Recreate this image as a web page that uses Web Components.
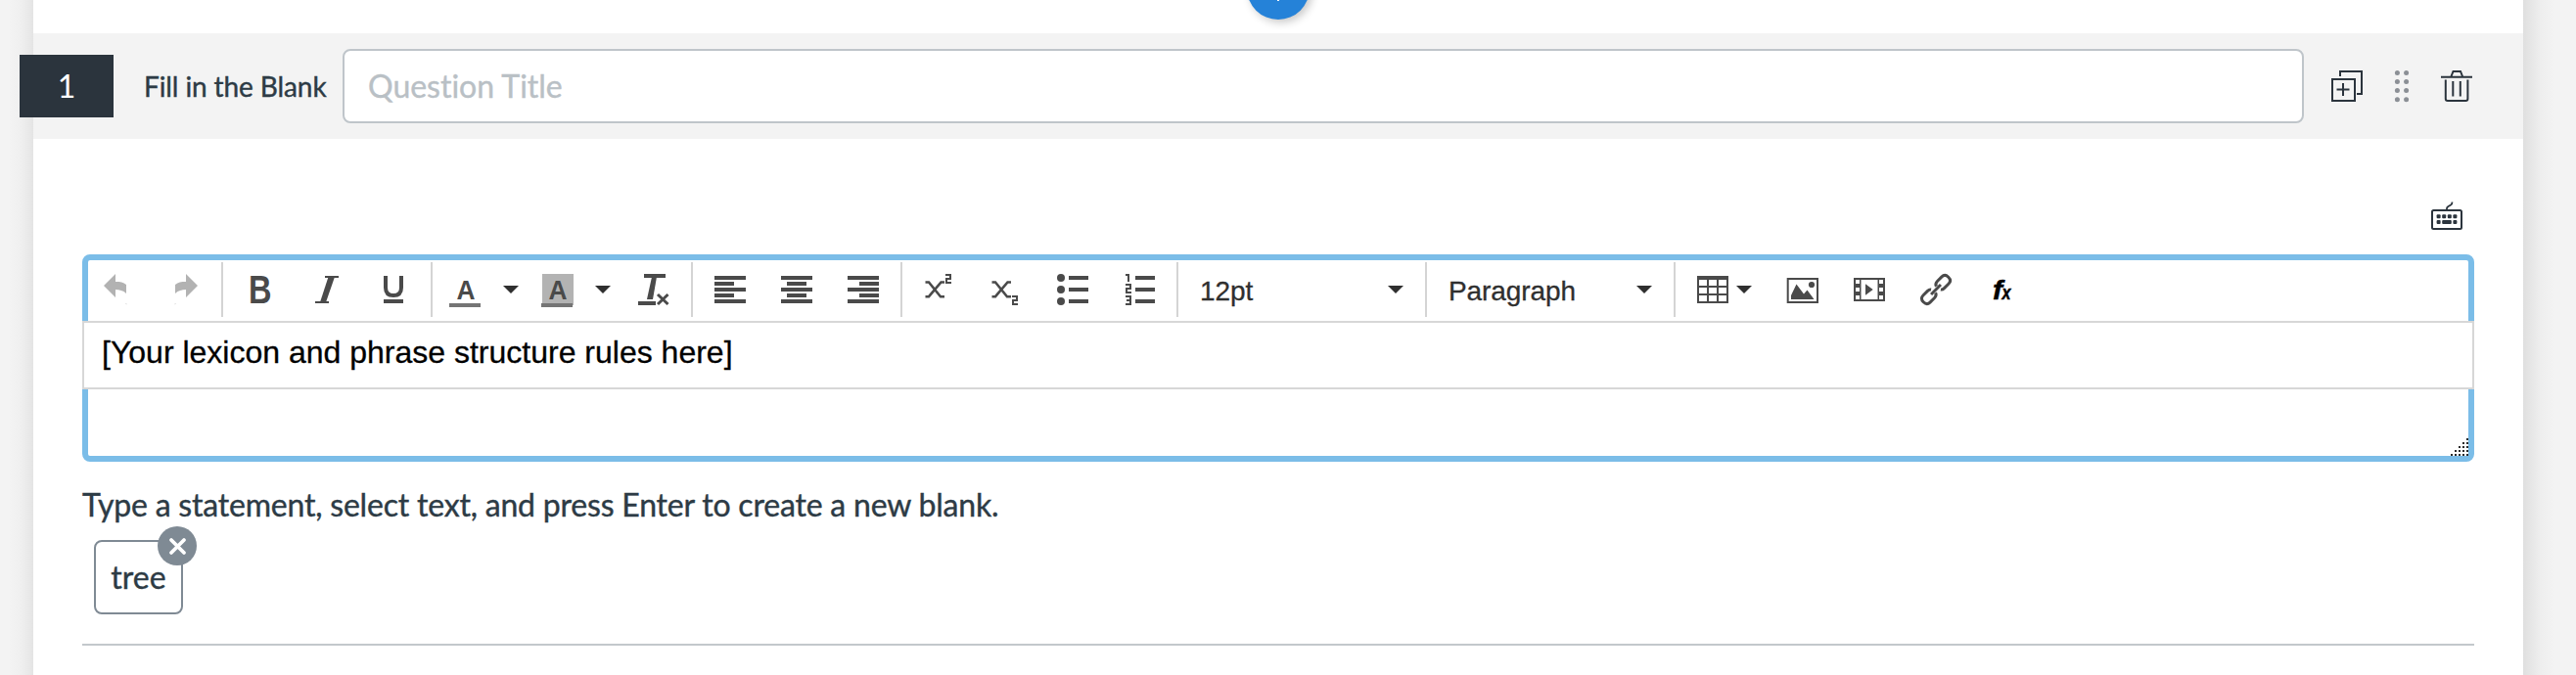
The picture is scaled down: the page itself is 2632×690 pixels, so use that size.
<!DOCTYPE html>
<html lang="en">
<head>
<meta charset="utf-8">
<title>Quiz editor</title>
<style>
html,body{margin:0;height:690px;overflow:hidden;background:#f3f3f3}
body{font-family:Lato,"Liberation Sans",sans-serif;color:#2d3b45;font-size:32px;font-variant-ligatures:none}
</style>
</head>
<body>
<quiz-sheet>
  <add-button slot="float"></add-button>
  <question-header number="1" label="Fill in the Blank">Question Title</question-header>
  <question-body>
    <ui-icon name="keyboard" slot="tools"></ui-icon>
    <rich-editor>
      <tool-bar slot="toolbar">
        <tool-group><tool-button icon="undo" disabled></tool-button><tool-button icon="redo" disabled></tool-button></tool-group>
        <tool-group><tool-button icon="bold"></tool-button><tool-button icon="italic"></tool-button><tool-button icon="underline"></tool-button></tool-group>
        <tool-group><tool-button icon="color" menu></tool-button><tool-button icon="highlight" menu></tool-button><tool-button icon="clear"></tool-button></tool-group>
        <tool-group><tool-button icon="left"></tool-button><tool-button icon="center"></tool-button><tool-button icon="right"></tool-button></tool-group>
        <tool-group><tool-button icon="sup"></tool-button><tool-button icon="sub"></tool-button><tool-button icon="bullets"></tool-button><tool-button icon="numbers"></tool-button></tool-group>
        <tool-group><tool-select>12pt</tool-select></tool-group>
        <tool-group><tool-select>Paragraph</tool-select></tool-group>
        <tool-group><tool-button icon="table" menu tight></tool-button><tool-button icon="image"></tool-button><tool-button icon="media"></tool-button><tool-button icon="link"></tool-button><tool-button icon="fx"></tool-button></tool-group>
      </tool-bar>
      [Your lexicon and phrase structure rules here]
    </rich-editor>
    <span slot="hint">Type a statement, select text, and press Enter to create a new blank.</span>
    <blank-chip slot="blanks">tree</blank-chip>
  </question-body>
</quiz-sheet>

<script>
const define = (name, render) => customElements.define(name, class extends HTMLElement {
  constructor() { super(); this.attachShadow({ mode: 'open' }); }
  connectedCallback() {
    const t = document.createElement('template');
    t.innerHTML = render(this);
    this.shadowRoot.replaceChildren(t.content.cloneNode(true));
  }
});

const bar = (x, y, w, h = 4) => `<rect x="${x}" y="${y}" width="${w}" height="${h}"/>`;
const stroke = (d, w) => `<path d="${d}" fill="none" stroke="currentColor" stroke-width="${w}"/>`;
const two = (x, y) => stroke(`M${x} ${y + 1}h5v4h-4v4h5`, 2);
const lines = (x, w) => [2, 14, 26].map(y => bar(0, y, 32)).join('') + [8, 20].map(y => bar(x, y, w)).join('');
const letterA = '<text x="16" y="26" text-anchor="middle" font-family="Liberation Sans,sans-serif" font-weight="700" font-size="28" textLength="19" lengthAdjust="spacingAndGlyphs">A</text>';
const back = 'M2 12L14 0V8C19 8 22 8.500 25 11V20C22 17 18 16 14 16V24ZM24.400 30h.8v1.500z';

const ICONS = {
  undo: `<path d="${back}"/>`,
  redo: `<path transform="matrix(-1 0 0 1 32 0)" d="${back}"/>`,
  bold: '<text x="4" y="30" font-family="Liberation Sans,sans-serif" font-weight="700" font-size="40" textLength="23.500" lengthAdjust="spacingAndGlyphs">B</text>',
  italic: bar(14, 2, 14, 2) + bar(4, 28, 14, 2) + '<path d="M17.500 3h6.500L15 29H9z"/>',
  underline: stroke('M8 2v12q0 8 8 8t8-8V2', 4) + bar(6, 26, 20),
  color: letterA + '<rect x="-1" y="30" width="32" height="4" fill="#757575"/>',
  highlight: '<rect width="32" height="32" fill="#b3b3b3"/>' + letterA + '<rect x="-1" y="30" width="32" height="4" fill="#757575"/>',
  clear: bar(6, 0, 22) + bar(0, 28, 18) + '<path d="M14 3h5L15 26H9z"/>' + stroke('M20 21l10.500 10M30.500 21L20 31', 3),
  left: lines(0, 20), center: lines(6, 20), right: lines(12, 20),
  sup: stroke('M1.500 8.500H5L17 23.200h4M21 8.500h-3.500L5 23.200H1.500', 2.6) + two(22, 0),
  sub: stroke('M1.500 8.500H5L17 23.200h4M21 8.500h-3.500L5 23.200H1.500', 2.6) + two(22, 22),
  bullets: [4, 16, 28].map(y => `<circle cx="4" cy="${y}" r="4"/>` + bar(12, y - 2, 20)).join(''),
  numbers: [2, 14, 26].map(y => bar(12, y, 20)).join('') + stroke('M2 1h3v7', 2) + two(2, 10) + stroke('M2 23h5v8H2M3 27h4', 2),
  table: '<path fill-rule="evenodd" d="M0 2h32v28H0zM2 6v6h8V6zM12 6v6h8V6zM22 6v6h8V6zM2 14v6h8v-6zM12 14v6h8v-6zM22 14v6h8v-6zM2 22v6h8v-6zM12 22v6h8v-6zM22 22v6h8v-6z"/>',
  image: '<path fill-rule="evenodd" d="M-.3 4H32v26H-.3zM1.700 6v22H30V6z"/><path d="M4 26V22L9.500 10.500L17 20.500L20.500 16.500L27.500 26z"/><circle cx="25" cy="11" r="3.100"/>',
  media: '<path fill-rule="evenodd" d="M0 4h32v24H0zM2 6v4h4V6zM2 14v4h4v-4zM2 22v4h4v-4zM26 6v4h4V6zM26 14v4h4v-4zM26 22v4h4v-4zM7.500 6v20h17V6z"/><path d="M12 10.300L19.700 16L12 21.700z"/>',
  link: '<g transform="translate(16 16) rotate(-45)">' + stroke('M3.500 3.500Q4.500 5 7 5H13.500Q18 5 18 0T13.500 -5H7Q3.500 -5 2.600 -2M-3.500 -3.500Q-4.500 -5 -7 -5H-13.500Q-18 -5 -18 0T-13.500 5H-7Q-3.500 5 -2.600 2', 3) + stroke('M-7 0H7', 3) + '</g>',
  fx: '<g fill="#000" stroke="#000" stroke-width=".5" font-family="Liberation Sans,sans-serif" font-style="italic" font-weight="700"><text x="6" y="26" font-size="28" textLength="10" lengthAdjust="spacingAndGlyphs">f</text><text x="15.500" y="26" font-size="20" textLength="9" lengthAdjust="spacingAndGlyphs">x</text></g>',
  duplicate: stroke('M9 6V1h22v23h-5', 2) + stroke('M1 9h23v22H1z', 2) + stroke('M5.500 19.500h13M12 13v13', 2),
  drag: '<g fill="#8b8f95">' + [2.400, 11.500, 20.500, 29.700].map(y => `<circle cx="11.400" cy="${y}" r="2.500"/><circle cx="20.600" cy="${y}" r="2.500"/>`).join('') + '</g>',
  trash: stroke('M0 6.700h32M10.500 6L12.500 1h7.500l2 5M4.800 9.500V29q0 2 2 2h18.600q2 0 2-2V9.500M12.300 11v15.500M19.800 11v15.500', 2),
  keyboard: '<rect x="1" y="10" width="30" height="19" rx="1.500" fill="none" stroke="currentColor" stroke-width="2"/>' + stroke('M16 10V8q0-1 1.500-2l2.500-1.400q1.500-1 1.500-3.100', 1.8)
    + [5.600, 11.200, 16.800, 22.400].map(x => `<rect x="${x}" y="14.300" width="4" height="4" rx="1"/>`).join('')
    + '<rect x="5.600" y="19.900" width="4" height="4" rx="1"/><rect x="11.200" y="19.900" width="9.600" height="4" rx="1"/><rect x="22.400" y="19.900" width="4" height="4" rx="1"/>'
};

define('ui-icon', el => `<style>:host{display:block;width:32px;height:32px;flex:none}svg{display:block;overflow:visible}</style>
  <svg width="32" height="32" viewBox="0 0 32 32" fill="currentColor">${ICONS[el.getAttribute('name')]}</svg>`);

define('quiz-sheet', () => `<style>
  :host{display:block;position:relative;box-sizing:border-box;width:2544px;height:690px;margin-left:34px;padding-top:34px;background:#fff}
  :host::before,:host::after{content:"";position:absolute;top:0;bottom:0}
  :host::before{left:-24px;width:24px;background:linear-gradient(to left,#e4e4e4,#ebebeb 30%,#f0f0f0 60%,#f3f3f3)}
  :host::after{right:-32px;width:32px;background:linear-gradient(to right,#dfdfdf,#e7e7e7 28%,#eee 55%,#f3f3f3)}
  </style><slot name="float"></slot><slot></slot>`);

define('add-button', () => `<style>
  :host{position:absolute;left:1240px;top:-44px;width:64px;height:64px;border-radius:50%;background:#2582d8;box-shadow:3px 3px 9px rgba(0,0,0,.22);display:grid;place-items:center}
  svg{display:block}</style><svg width="26" height="26" viewBox="0 0 26 26" fill="none" stroke="#fff" stroke-width="2"><path d="M13 0v26M0 13h26"/></svg>`);

define('question-header', el => `<style>
  :host{display:flex;align-items:center;box-sizing:border-box;height:108px;background:#f3f3f3;padding-right:52px}
  .num{position:relative;z-index:1;width:96px;height:64px;line-height:64px;margin-left:-14px;background:#2b343d;color:#fff;text-align:center;flex:none}
  .label{width:203px;margin-left:31px;font-size:28px;letter-spacing:-.1px;flex:none;white-space:nowrap;-webkit-text-stroke:.4px currentColor}
  .title{flex:1;height:72px;line-height:72px;border:2px solid #bfc5ca;border-radius:8px;background:#fff;color:#b9c0c5;padding-left:24px;margin-right:28px;-webkit-text-stroke:.4px currentColor}
  .icons{display:flex;gap:24px;color:#2b343d}
  </style><div class="num">${el.getAttribute('number')}</div><div class="label">${el.getAttribute('label')}</div>
  <div class="title"><slot></slot></div>
  <div class="icons"><ui-icon name="duplicate"></ui-icon><ui-icon name="drag"></ui-icon><ui-icon name="trash"></ui-icon></div>`);

define('question-body', () => `<style>
  :host{display:block;margin:0 50px}
  .tools{display:flex;justify-content:flex-end;height:55px;padding:63px 12px 0 0;color:#2b343d}
  .hint{height:40px;line-height:40px;margin-top:24px;white-space:nowrap;letter-spacing:-.2px;-webkit-text-stroke:.4px currentColor}
  .blanks{display:flex;padding:16px 12px 30px;border-bottom:2px solid #c3c8cc}
  </style><div class="tools"><slot name="tools"></slot></div><slot></slot>
  <div class="hint"><slot name="hint"></slot></div><div class="blanks"><slot name="blanks"></slot></div>`);

define('rich-editor', () => `<style>
  :host{display:block;position:relative;box-sizing:border-box;height:212px;border:6px solid #7bbde8;border-radius:8px;background:#fff}
  .text{margin:0 -6px;box-sizing:border-box;height:70px;border:2px solid #d7d7d7;background:#fff;color:#000;padding-left:18px;line-height:60px;font-family:"Liberation Sans",Arial,sans-serif;font-size:32px;-webkit-text-stroke:.3px currentColor}
  svg{position:absolute;right:0;bottom:0;display:block}
  </style><slot name="toolbar"></slot><div class="text"><slot></slot></div>
  <svg width="18" height="18" fill="#2b2b2b">${[0, 1, 2, 3, 4].map(r => Array.from({ length: r + 1 }, (_, c) => bar(16 - 4 * c, 4 * r, 2, 2)).join('')).join('')}</svg>`);

define('tool-bar', () => `<style>:host{display:flex;box-sizing:border-box;height:62px;padding-top:2px;margin-left:-4px}</style><slot></slot>`);
define('tool-group', () => `<style>
  :host{display:flex;height:56px;padding:0 4px;border-left:2px solid #d4d4d4}
  :host(:first-child){border-left:0;padding-left:0}</style><slot></slot>`);

define('tool-button', el => `<style>
  :host{display:flex;align-items:center;box-sizing:border-box;width:68px;padding-left:18px;color:#4a4a4a}
  :host([menu]){width:94px;padding-left:14px;gap:22px}
  :host([tight]){width:92px;padding-left:18px;gap:8px}
  :host([disabled]){opacity:.42}
  svg{display:block;flex:none}
  </style><ui-icon name="${el.getAttribute('icon')}"></ui-icon>${el.hasAttribute('menu') ? '<svg width="16" height="8"><path d="M0 0h16L8 8z" fill="#2f2f2f"/></svg>' : ''}`);

define('tool-select', () => `<style>
  :host{display:flex;align-items:center;justify-content:space-between;box-sizing:border-box;width:244px;padding:0 18px;color:#2f2f2f;font:28px "Liberation Sans",Arial,sans-serif}
  span{padding-top:3px;letter-spacing:-.1px;-webkit-text-stroke:.3px currentColor}
  svg{display:block}
  </style><span><slot></slot></span><svg width="16" height="8"><path d="M0 0h16L8 8z" fill="#2f2f2f"/></svg>`);

define('blank-chip', () => `<style>
  :host{display:block;position:relative;box-sizing:border-box;width:91px;height:76px;line-height:72px;border:2px solid #7f8a94;border-radius:8px;text-align:center;-webkit-text-stroke:.4px currentColor}
  svg{position:absolute;left:63px;top:-16px;display:block}
  </style><slot></slot><svg width="40" height="40"><circle cx="20" cy="20" r="20" fill="#7f8a94"/><path d="M14 14l13 13M27 14L14 27" stroke="#fff" stroke-width="3.800" stroke-linecap="round"/></svg>`);
</script>
</body>
</html>
